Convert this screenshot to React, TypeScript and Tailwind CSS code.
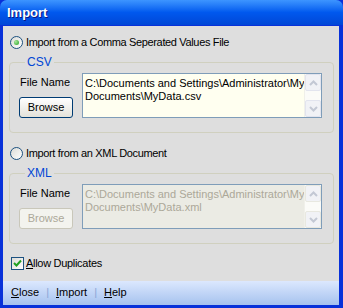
import { useState } from "react"

const Radio = ({ checked }: { checked: boolean }) => (
    <span className="w-[13px] h-[13px] rounded-full border border-[#1c5180] bg-gradient-to-br from-[#dcdcd7] to-white flex items-center justify-center">
        {checked && <span className="w-[5px] h-[5px] rounded-full bg-[radial-gradient(circle_at_35%_35%,#a8e89a,#21a121)]" />}
    </span>
)

const Scroller = ({ dim }: { dim: boolean }) => (
    <div className="w-[17px] flex flex-col bg-[#fbfbf8] border-l border-[#f0f0ea]">
        <div className={`h-[17px] rounded-[2px] border ${dim ? "border-[#e8e8e0]" : "border-[#e2e4ee]"} bg-[#f1f2f6] flex items-center justify-center`}>
            <svg width="9" height="6" viewBox="0 0 9 6"><path d="M1 5 L4.5 1.5 L8 5" fill="none" stroke="#c3c8d4" strokeWidth="2" /></svg>
        </div>
        <div className="flex-1" />
        <div className={`h-[17px] rounded-[2px] border ${dim ? "border-[#e8e8e0]" : "border-[#e2e4ee]"} bg-[#f1f2f6] flex items-center justify-center`}>
            <svg width="9" height="6" viewBox="0 0 9 6"><path d="M1 1 L4.5 4.5 L8 1" fill="none" stroke="#c3c8d4" strokeWidth="2" /></svg>
        </div>
    </div>
)

const Group = ({ title, path, disabled }: { title: string; path: string; disabled: boolean }) => (
    <fieldset className="mx-[6px] h-[77px] border border-[#d0d0bf] rounded-[4px] pl-[9px] pr-[11px] pt-[4px]">
        <legend className="ml-[6px] px-[2px] text-[#0046d5] text-[12px] leading-[13px]">{title}</legend>
        <div className="flex gap-[8px]">
            <div className="w-[55px] flex flex-col">
                <span className="pt-[3px] pl-[1px] leading-[13px] whitespace-nowrap">File Name</span>
                <button
                    className={`mt-[8px] h-[21px] w-[54px] rounded-[3px] border leading-[13px] ${disabled
                        ? "border-[#c9c7ba] text-[#aca899] bg-[#f3f3ee]"
                        : "border-[#003c74] bg-gradient-to-b from-white to-[#e3e2da]"}`}
                >
                    Browse
                </button>
            </div>
            <div className={`flex-1 h-[45px] flex border border-[#7f9db9] ${disabled ? "bg-[#ebebe4] text-[#aca899]" : "bg-[#fffff0]"}`}>
                <div className="flex-1 pl-[2px] pt-[3px] leading-[13px] whitespace-pre overflow-hidden">{path}</div>
                <Scroller dim={disabled} />
            </div>
        </div>
    </fieldset>
)

export default function App() {
    const [csv] = useState(true)
    return (
        <div className="w-[343px] h-[308px] bg-[#0831d9] flex flex-col text-[11px] text-black font-['Liberation_Sans',Arial,sans-serif]">
            <div className="h-[25px] shrink-0 rounded-t-[7px] bg-gradient-to-b from-[#3d95ff] via-[#0058ee] to-[#0047d6] flex items-center pl-[7px]">
                <span className="text-white font-bold text-[13px] [text-shadow:1px_1px_#0a1883]">Import</span>
            </div>
            <div className="h-[256px] shrink-0 ml-[3px] mr-[4px] bg-[#dedede] border-t border-[#0831d9] flex flex-col">
                <div className="flex items-center gap-[3px] pl-[7px] mt-[10px] h-[13px] tracking-[-0.35px]">
                    <Radio checked={csv} />
                    <span>Import from a Comma Seperated Values File</span>
                </div>
                <div className="mt-[7px]">
                    <Group title="CSV" path={"C:\\Documents and Settings\\Administrator\\My\nDocuments\\MyData.csv"} disabled={false} />
                </div>
                <div className="flex items-center gap-[3px] pl-[7px] mt-[14px] h-[13px] tracking-[-0.35px]">
                    <Radio checked={!csv} />
                    <span>Import from an XML Document</span>
                </div>
                <div className="mt-[7px]">
                    <Group title="XML" path={"C:\\Documents and Settings\\Administrator\\My\nDocuments\\MyData.xml"} disabled={true} />
                </div>
                <div className="flex items-center gap-[2px] pl-[8px] mt-[13px] h-[13px] tracking-[-0.3px]">
                    <span className="w-[13px] h-[13px] border border-[#1c5180] bg-gradient-to-br from-[#dcdcd7] to-white flex items-center justify-center">
                        <svg width="9" height="9" viewBox="0 0 9 9"><path d="M1 4 L3.5 6.5 L8 1.5" fill="none" stroke="#21a121" strokeWidth="2" /></svg>
                    </span>
                    <span><u>A</u>llow Duplicates</span>
                </div>
            </div>
            <div className="h-[24px] shrink-0 ml-[3px] mr-[4px] bg-gradient-to-b from-[#dce8fe] to-[#a6c2ee] flex items-center pl-[8px] pb-[1px]">
                <span><u>C</u>lose</span>
                <span className="mx-[7px] text-[#8aa6d6]">|</span>
                <span><u>I</u>mport</span>
                <span className="mx-[7px] text-[#8aa6d6]">|</span>
                <span><u>H</u>elp</span>
            </div>
        </div>
    )
}
